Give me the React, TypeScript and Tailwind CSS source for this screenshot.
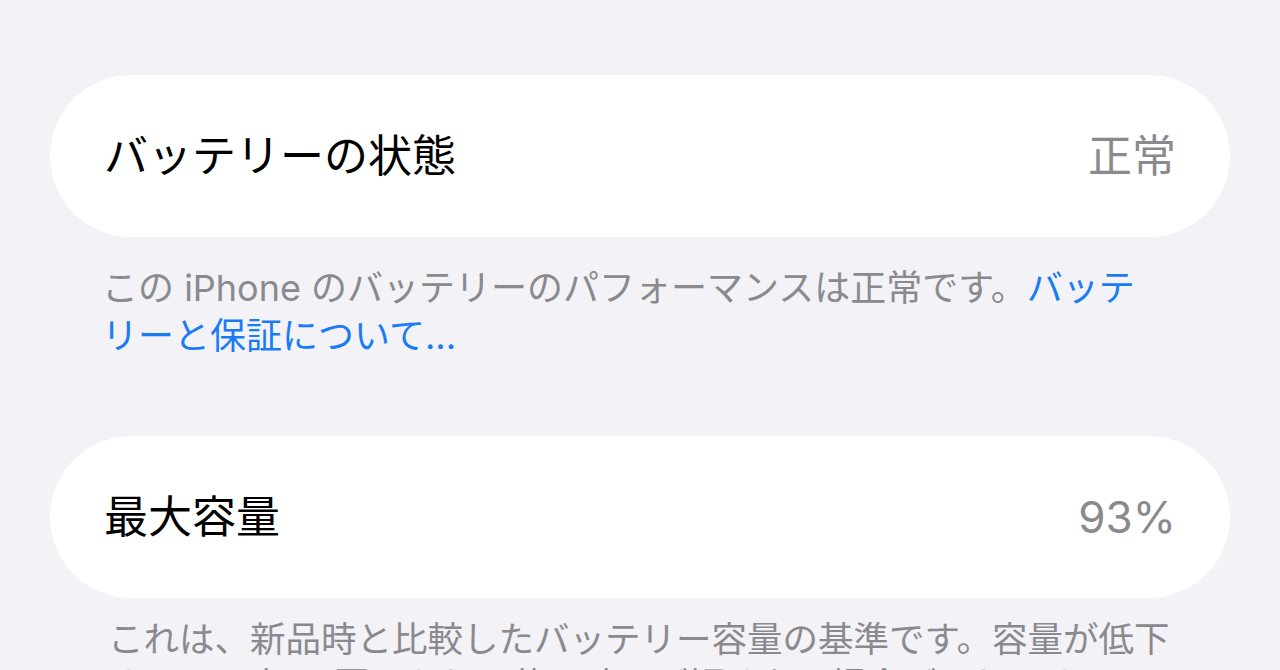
const jp = "font-['Inter','Noto_Sans_CJK_JP',sans-serif]";

function Row({ label, value }: { label: string; value: string }) {
  return (
    <div className="mx-[50px] flex h-[162px] items-center justify-between rounded-full bg-white px-[54px]">
      <span className="text-[44px] leading-none text-black">{label}</span>
      <span className="text-[44px] leading-none text-[#8a8a8e]">{value}</span>
    </div>
  );
}

export default function App() {
  return (
    <main className={`h-[670px] overflow-hidden bg-[#f2f2f7] pt-[75px] ${jp}`}>
      <Row label="バッテリーの状態" value="正常" />
      <p className="mx-[50px] mt-[27px] px-[52px] text-[36px] leading-[48px] text-[#8a8a8e]">
        <span className="whitespace-nowrap">
          この iPhone のバッテリーのパフォーマンスは正常です。
          <span className="text-[#1a7cf5]">バッテ</span>
        </span>
        <br />
        <span className="text-[#1a7cf5]">リーと保証について...</span>
      </p>

      <div className="mt-[76px]">
        <Row label="最大容量" value="93%" />
      </div>
      <p className="mx-[50px] mt-[19px] px-[58px] text-[35.5px] leading-[46px] text-[#8a8a8e]">
        <span className="whitespace-nowrap">これは、新品時と比較したバッテリー容量の基準です。容量が低下</span>
        <br />
        <span className="whitespace-nowrap">すると、充電1回あたりの使用時間が短くなる場合があります。</span>
      </p>
    </main>
  );
}
